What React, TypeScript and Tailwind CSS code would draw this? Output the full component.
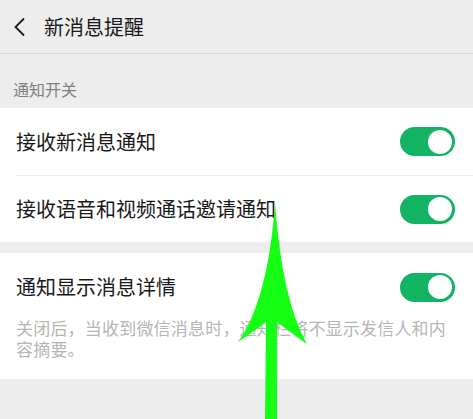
import React from "react";

const Toggle = () => (
  <div className="w-[55px] h-[29px] rounded-full bg-[#12b463] flex items-center justify-end pr-[3px] shrink-0">
    <div className="w-[24px] h-[24px] rounded-full bg-white" />
  </div>
);

const Row = ({ label }: { label: string }) => (
  <div className="flex items-center justify-between pl-[16px] pr-[18px] h-full">
    <span className="text-[20px] leading-[24px] text-[#191919]">{label}</span>
    <Toggle />
  </div>
);

const App = () => {
  return (
    <div
      className="relative w-[473px] h-[419px] overflow-hidden bg-[#ededed]"
      style={{ fontFamily: '"Noto Sans CJK SC", "Noto Sans", sans-serif' }}
    >
      {/* header */}
      <div className="h-[54px] flex items-center border-b border-[#d8d8d8]">
        <svg width="44" height="54" viewBox="0 0 44 54" className="shrink-0">
          <path d="M24 18.5 L15.5 27 L24 35.5" fill="none" stroke="#1a1a1a" strokeWidth="1.8" />
        </svg>
        <span className="text-[20px] leading-[24px] text-[#191919]">新消息提醒</span>
      </div>

      {/* section label */}
      <div className="h-[54px] flex items-end pb-[9px] px-[13px]">
        <span className="text-[16px] leading-[20px] text-[#808080]">通知开关</span>
      </div>

      <div className="bg-white">
        <div className="h-[67px]">
          <Row label="接收新消息通知" />
        </div>
        <div className="ml-[16px] h-px bg-[#ececec]" />
        <div className="h-[66px]">
          <Row label="接收语音和视频通话邀请通知" />
        </div>
      </div>

      <div className="h-[11px]" />

      <div className="bg-white h-[126px] pt-[19px]">
        <div className="h-[30px]">
          <Row label="通知显示消息详情" />
        </div>
        <p className="mt-[15px] pl-[16px] pr-[22px] text-[17px] leading-[21px] text-[#b5b5b5] tracking-[0.2px]">
          关闭后，当收到微信消息时，通知栏将不显示发信人和内容摘要。
        </p>
      </div>

      <div className="pt-[36px] px-[13px]">
        <span className="text-[16px] leading-[20px] text-[#808080]">新消息提示音</span>
      </div>

      {/* green arrow annotation */}
      <svg className="absolute inset-0" width="473" height="419" viewBox="0 0 473 419">
        <path
          d="M275 203 Q268 300 238 342 Q256 330 266 322 L265 419 L277 419 L277 322 Q290 332 307 344 Q282 300 275 203 Z"
          fill="#14ff14"
        />
      </svg>
    </div>
  );
};

export default App;
